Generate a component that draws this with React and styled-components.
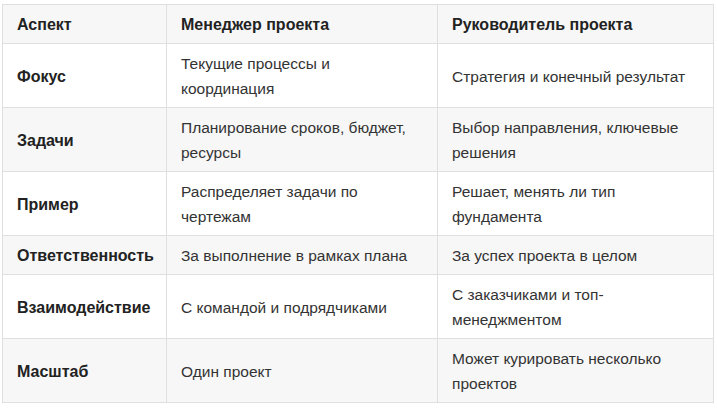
import React from 'react';
import styled, { createGlobalStyle } from 'styled-components';

const GlobalStyle = createGlobalStyle`
  body {
    margin: 0;
    background: #ffffff;
    font-family: "Liberation Sans", Arial, sans-serif;
  }
`;

const Page = styled.div`
  padding: 4px 0 0 2px;
`;

const Table = styled.table`
  width: 712px;
  border-collapse: collapse;
  table-layout: fixed;
  font-size: 15.5px;
  line-height: 25px;
  color: #333333;
`;

const Row = styled.tr`
  background-color: ${(p) => (p.$shaded ? '#f7f7f7' : '#ffffff')};
`;

const HeadCell = styled.th`
  padding: 7px 14px 6px;
  text-align: left;
  font-size: 16px;
  font-weight: bold;
  color: #222222;
  border: 1px solid #dfdfdf;
`;

const Cell = styled.td`
  padding: 7px 14px 6px;
  text-align: left;
  vertical-align: middle;
  border: 1px solid #dfdfdf;
  font-size: ${(p) => (p.$label ? '16px' : '15.5px')};
  font-weight: ${(p) => (p.$label ? 'bold' : 'normal')};
  color: ${(p) => (p.$label ? '#222222' : '#333333')};
`;

const rows = [
  ['Фокус', 'Текущие процессы и координация', 'Стратегия и конечный результат'],
  ['Задачи', 'Планирование сроков, бюджет, ресурсы', 'Выбор направления, ключевые решения'],
  ['Пример', 'Распределяет задачи по чертежам', 'Решает, менять ли тип фундамента'],
  ['Ответственность', 'За выполнение в рамках плана', 'За успех проекта в целом'],
  ['Взаимодействие', 'С командой и подрядчиками', 'С заказчиками и топ-менеджментом'],
  ['Масштаб', 'Один проект', 'Может курировать несколько проектов'],
];

const App = () => {
  return (
    <Page>
      <GlobalStyle />
      <Table>
        <colgroup>
          <col style={{ width: '164px' }} />
          <col style={{ width: '271px' }} />
          <col />
        </colgroup>
        <thead>
          <Row $shaded>
            <HeadCell>Аспект</HeadCell>
            <HeadCell>Менеджер проекта</HeadCell>
            <HeadCell>Руководитель проекта</HeadCell>
          </Row>
        </thead>
        <tbody>
          {rows.map((r, i) => (
            <Row key={r[0]} $shaded={i % 2 === 1}>
              <Cell $label>{r[0]}</Cell>
              <Cell>{r[1]}</Cell>
              <Cell>{r[2]}</Cell>
            </Row>
          ))}
        </tbody>
      </Table>
    </Page>
  );
};

export default App;
